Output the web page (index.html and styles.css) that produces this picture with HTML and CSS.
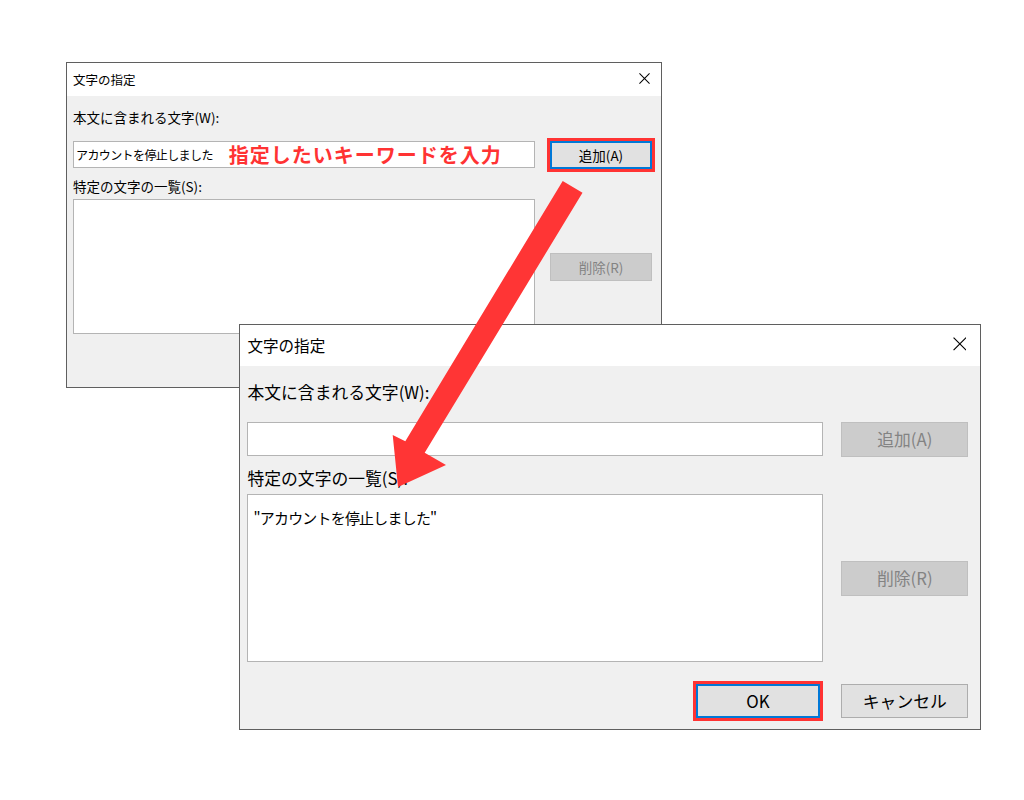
FILE: index.html
```html
<!doctype html>
<html lang="ja">
<head>
    <meta charset="UTF-8">
    <meta name="viewport" content="width=device-width, initial-scale=1.0">
    <title>文字の指定</title>
    <link rel="stylesheet" href="styles.css">
</head>
<body>
<div class="desktop">
    <!-- before: keyword typed in -->
    <div class="window window-back">
        <div class="dialog">
            <div class="titlebar">
                <span class="title">文字の指定</span>
                <svg class="close" viewBox="0 0 12 12" width="12" height="12">
                    <path d="M0.5 0.5 L11.5 11.5 M11.5 0.5 L0.5 11.5" stroke="#000" stroke-width="1.1" fill="none"/>
                </svg>
            </div>
            <div class="dialog-body">
                <label class="label label-top">本文に含まれる文字(W):</label>
                <div class="field">
                    <span class="field-text">アカウントを停止しました</span>
                    <span class="note">指定したいキーワードを入力</span>
                </div>
                <button class="btn btn-focus marked">追加(A)</button>
                <label class="label label-list">特定の文字の一覧(S):</label>
                <div class="listbox"></div>
                <button class="btn btn-side" disabled>削除(R)</button>
                <button class="btn btn-ok">OK</button>
                <button class="btn">キャンセル</button>
            </div>
        </div>
    </div>

    <!-- after: keyword added to the list -->
    <div class="window window-front">
        <div class="dialog dialog-large">
            <div class="titlebar">
                <span class="title">文字の指定</span>
                <svg class="close" viewBox="0 0 12 12" width="12" height="12">
                    <path d="M0.5 0.5 L11.5 11.5 M11.5 0.5 L0.5 11.5" stroke="#000" stroke-width="1" fill="none"/>
                </svg>
            </div>
            <div class="dialog-body">
                <label class="label label-top">本文に含まれる文字(W):</label>
                <div class="field"></div>
                <button class="btn" disabled>追加(A)</button>
                <label class="label label-list">特定の文字の一覧(S):</label>
                <div class="listbox">
                    <div class="list-item">"アカウントを停止しました"</div>
                </div>
                <button class="btn btn-side" disabled>削除(R)</button>
                <button class="btn btn-ok btn-focus marked">OK</button>
                <button class="btn">キャンセル</button>
            </div>
        </div>
    </div>

    <svg class="arrow" viewBox="0 0 1024 800" width="1024" height="800">
        <polygon fill="#ff3535"
                 points="562.7,181 582.5,192.7 424.7,452.8 446,465 398,487 392.7,435 405.3,441.2"/>
    </svg>
</div>
</body>
</html>
```

FILE: styles.css
```css
body {
    margin: 0;
    background-color: #ffffff;
    font-family: "Noto Sans CJK JP", "Noto Sans", sans-serif;
    color: #000000;
}

.desktop {
    position: relative;
    width: 1024px;
    height: 800px;
    overflow: hidden;
}

.window {
    position: absolute;
}

.window-back {
    left: 66px;
    top: 62px;
    z-index: 1;
}

.window-front {
    left: 239px;
    top: 324px;
    z-index: 2;
}

.dialog {
    width: 596px;
    height: 326px;
    box-sizing: border-box;
    border: 1px solid #5f5f5f;
    background-color: #f0f0f0;
    display: flex;
    flex-direction: column;
}

.dialog-large {
    zoom: 1.245;
}

/* Title bar */
.titlebar {
    height: 33px;
    flex: none;
    background-color: #ffffff;
    display: flex;
    align-items: center;
    justify-content: space-between;
    padding: 0 11px 0 6px;
}

.title {
    font-size: 12.5px;
    line-height: 16px;
}

.close {
    display: block;
    width: 11px;
    height: 11px;
    margin-bottom: 2px;
}

/* Body grid */
.dialog-body {
    flex: 1;
    display: grid;
    grid-template-columns: 462px 102px;
    column-gap: 15px;
    align-items: start;
    padding: 11px 9px 9px 6px;
}

.label {
    grid-column: 1 / -1;
    font-size: 13.5px;
    line-height: 20px;
    white-space: nowrap;
}

.label-top {
    margin-bottom: 14px;
}

.label-list {
    margin-top: 7px;
    margin-bottom: 3px;
}

.field {
    height: 27px;
    box-sizing: border-box;
    border: 1px solid #b4b4b4;
    background-color: #ffffff;
    display: flex;
    align-items: center;
    padding: 0 2px;
    white-space: nowrap;
}

.field-text {
    font-size: 12px;
    letter-spacing: -0.6px;
}

.note {
    margin-left: 16px;
    color: #ff3333;
    font-size: 20px;
    font-weight: 700;
    letter-spacing: 1px;
    line-height: 22px;
}

.listbox {
    height: 135px;
    box-sizing: border-box;
    border: 1px solid #b4b4b4;
    background-color: #ffffff;
    padding: 9px 4px;
}

.list-item {
    font-size: 12px;
    line-height: 18px;
    letter-spacing: -0.6px;
    white-space: nowrap;
}

/* Buttons */
.btn {
    height: 28px;
    box-sizing: border-box;
    border: 1px solid #adadad;
    background-color: #e1e1e1;
    color: #000000;
    font-family: inherit;
    font-size: 13.5px;
    line-height: 18px;
    padding: 0;
    margin: 0;
}

.btn:disabled {
    background-color: #cccccc;
    border-color: #bfbfbf;
    color: #838383;
}

.btn-focus {
    border: 2px solid #0078d7;
}

.btn-side {
    align-self: center;
}

.btn-ok {
    width: 100px;
    justify-self: end;
    margin-top: 17px;
    margin-right: 2px;
}

.btn-ok + .btn {
    margin-top: 17px;
}

/* red annotation frame */
.marked {
    outline: 3px solid #ff3333;
    outline-offset: 0;
}

.arrow {
    position: absolute;
    left: 0;
    top: 0;
    z-index: 3;
    pointer-events: none;
}
```
